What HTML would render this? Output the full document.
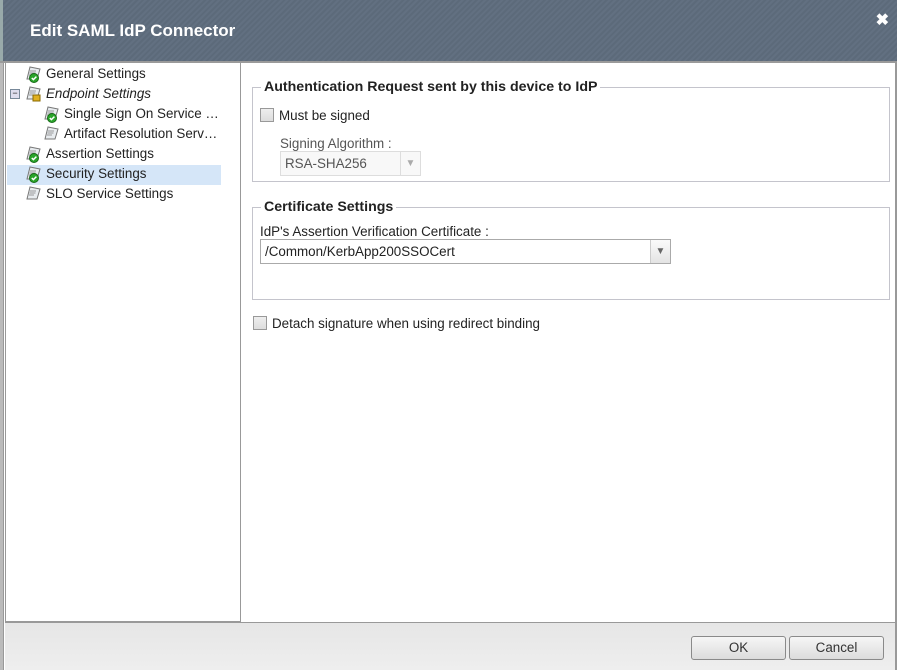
<!DOCTYPE html>
<html><head><style>
*{margin:0;padding:0;box-sizing:border-box}
body{width:897px;height:670px;overflow:hidden;background:#fff;font-family:"Liberation Sans",Arial,sans-serif;font-size:13.4px;color:#222;position:relative}
.hdr{position:absolute;left:0;top:0;width:897px;height:61px;background:repeating-linear-gradient(135deg,#627081 0 2px,#5c6a7a 2px 4px);border-left:3px solid #9aa;}
.hdr h1{position:absolute;left:27px;top:21px;color:#fff;font-size:17px;font-weight:bold}
.x{position:absolute;right:8px;top:10px;color:#fff;font-size:16px;font-weight:bold}
.hline{position:absolute;left:0;top:61px;width:897px;height:2px;background:#9a9a9a}
.lb{position:absolute;left:0;top:63px;width:4px;height:607px;background:#bbb;border-right:1px solid #999}
.rb{position:absolute;right:0;top:63px;width:2px;height:607px;background:#999}
.left{position:absolute;left:5px;top:63px;width:236px;height:559px;border:1px solid #999;border-top:none;background:#fff}
.it{position:absolute;height:20px;line-height:20px;white-space:nowrap}
.ic{position:absolute;width:18px;height:18px;top:1px}
.sel{position:absolute;left:1px;top:102px;width:214px;height:20px;background:#d5e6f8}
.foot{position:absolute;left:5px;top:622px;width:890px;height:48px;background:linear-gradient(#e6e6e6,#eeeeee);border-top:1px solid #999}
.btn{position:absolute;top:636px;height:24px;border:1px solid #8a8a8a;border-radius:3px;background:linear-gradient(#f6f6f6,#dcdcdc);text-align:center;line-height:22px;color:#333}
fieldset{position:absolute;border:1px solid #c4c4cc;}
legend{font-weight:bold;font-size:14.2px;padding:0 3px;margin-left:8px;color:#222}
.cb{position:absolute;width:14px;height:14px;border:1px solid #999;background:linear-gradient(#eee,#ddd)}
.t{position:absolute;white-space:nowrap}
.sel1{position:absolute;border:1px solid #aaa;background:#fff}
</style></head><body>
<div class="hdr"><h1>Edit SAML IdP Connector</h1><div class="x">✖</div></div>
<div class="hline"></div>
<div class="lb"></div><div class="rb"></div>
<div class="left">
<div class="sel"></div>
<svg width="0" height="0" style="position:absolute"><defs>
<g id="doc"><path d="M6 2l10 2-3 10H3z" fill="#e8ecef" stroke="#777"/><path d="M6 6h6M5.5 8h6M5 10h5" stroke="#999"/></g>
<g id="ok"><use href="#doc"/><circle cx="10" cy="13" r="4.5" fill="#2aa52a" stroke="#176b17"/><path d="M7.8 13l1.6 1.6 3-3" stroke="#fff" stroke-width="1.5" fill="none"/></g>
</defs></svg>
<div class="it" style="left:20px;top:1px"><svg class="ic" style="left:-2px"><use href="#ok"/></svg><span style="margin-left:20px">General Settings</span></div>
<div class="it" style="left:4px;top:21px"><span style="position:absolute;left:0;top:5px;width:10px;height:10px;border:1px solid #789;background:#dde;font-size:9px;line-height:7px;text-align:center">−</span><svg class="ic" style="left:14px"><use href="#doc"/><rect x="9" y="10" width="7" height="6" fill="#e0b020" stroke="#8a6a00"/></svg><i style="margin-left:36px">Endpoint Settings</i></div>
<div class="it" style="left:38px;top:41px"><svg class="ic" style="left:-2px"><use href="#ok"/></svg><span style="margin-left:20px">Single Sign On Service …</span></div>
<div class="it" style="left:38px;top:61px"><svg class="ic" style="left:-2px"><use href="#doc"/></svg><span style="margin-left:20px">Artifact Resolution Serv…</span></div>
<div class="it" style="left:20px;top:81px"><svg class="ic" style="left:-2px"><use href="#ok"/></svg><span style="margin-left:20px">Assertion Settings</span></div>
<div class="it" style="left:20px;top:101px"><svg class="ic" style="left:-2px"><use href="#ok"/></svg><span style="margin-left:20px">Security Settings</span></div>
<div class="it" style="left:20px;top:121px"><svg class="ic" style="left:-2px"><use href="#doc"/></svg><span style="margin-left:20px">SLO Service Settings</span></div>
</div>

<fieldset style="left:252px;top:79px;width:638px;height:103px"><legend>Authentication Request sent by this device to IdP</legend></fieldset>
<div class="cb" style="left:260px;top:108px"></div>
<div class="t" style="left:279px;top:108px">Must be signed</div>
<div class="t" style="left:280px;top:136px;color:#555">Signing Algorithm :</div>
<div class="sel1" style="left:280px;top:151px;width:141px;height:25px;background:#f8f8f8;border-color:#ddd"><span style="position:absolute;left:4px;top:4px;color:#555">RSA-SHA256</span><span style="position:absolute;right:0;top:0;width:20px;height:23px;border-left:1px solid #ddd;color:#aaa;font-size:10px;text-align:center;line-height:23px">▼</span></div>

<fieldset style="left:252px;top:199px;width:638px;height:101px"><legend>Certificate Settings</legend></fieldset>
<div class="t" style="left:260px;top:224px">IdP's Assertion Verification Certificate :</div>
<div class="sel1" style="left:260px;top:239px;width:411px;height:25px"><span style="position:absolute;left:4px;top:4px">/Common/KerbApp200SSOCert</span><span style="position:absolute;right:0;top:0;width:20px;height:23px;border-left:1px solid #ccc;background:linear-gradient(#fafafa,#e4e4e4);color:#666;font-size:10px;text-align:center;line-height:23px">▼</span></div>

<div class="cb" style="left:253px;top:316px"></div>
<div class="t" style="left:272px;top:316px">Detach signature when using redirect binding</div>

<div class="foot"></div>
<div class="btn" style="left:691px;width:95px">OK</div>
<div class="btn" style="left:789px;width:95px">Cancel</div>
</body></html>
